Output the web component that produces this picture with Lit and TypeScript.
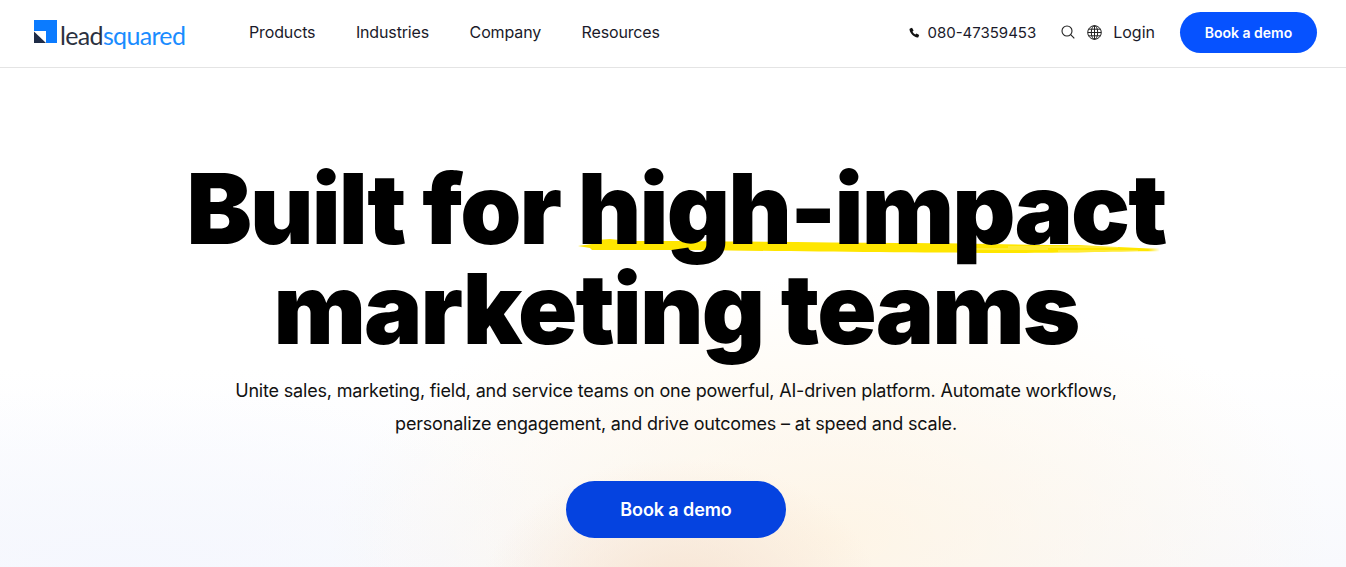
import { LitElement, html, css } from "lit";
import { customElement } from "lit/decorators.js";

@customElement("app-root")
export class AppRoot extends LitElement {
  static styles = css`
    :host { display: block; width: 100%; height: 567px; overflow: hidden; font-family: Inter, "Liberation Sans", sans-serif; color: #000; background: #fff; }
    .nav { height: 68px; box-sizing: border-box; border-bottom: 1px solid #e4e4e4; display: flex; align-items: center; padding: 0 29px 3px 34px; background: #fff; }
    .logo { display: flex; align-items: center; width: 215px; gap: 3px; }
    .logo svg { display: block; flex: none; }
    .word { font-family: Lato, sans-serif; font-weight: 400; font-size: 25px; line-height: 28px; letter-spacing: -0.66px; color: #2b3140; margin-top: 5px; }
    .word span { color: #1a8cff; }
    .links { display: flex; gap: 40.5px; font-size: 16px; letter-spacing: -0.14px; color: #1a1a2a; }
    .right { margin-left: auto; display: flex; align-items: center; color: #1a1a2a; font-size: 16px; }
    .phone { display: flex; align-items: center; gap: 7px; font-size: 15px; margin-right: 25px; }
    .right svg { display: block; }
    .login { margin-left: 11px; margin-right: 25px; }
    .globe { margin-left: 12px; }
    .btn-small { background: #0652ff; color: #fff; width: 137px; height: 41px; border-radius: 21px; display: flex; align-items: center; justify-content: center; font-size: 14px; font-weight: 600; }
    .hero { position: relative; height: 499px; box-sizing: border-box; padding-left: 6px; display: flex; flex-direction: column; align-items: center; overflow: hidden;
      background:
        radial-gradient(ellipse 200px 140px at 680px 530px, rgba(246, 226, 208, 0.9), rgba(246, 226, 208, 0) 100%),
        radial-gradient(ellipse 500px 260px at 830px 470px, rgba(255, 244, 226, 0.85), rgba(255, 244, 226, 0) 100%),
        radial-gradient(ellipse 500px 180px at 120px 499px, rgba(245, 247, 254, 0.9), rgba(245, 247, 254, 0) 100%),
        linear-gradient(180deg, #fff 300px, #f8f9fd 499px);
    }
    h1 { position: relative; margin: 91px 0 0; font-size: 98px; line-height: 100px; font-weight: 870; letter-spacing: -1.9px; text-align: center; white-space: nowrap; }
    .mark { position: relative; display: inline-block; }
    .mark b { position: relative; font-weight: inherit; }
    .brush { position: absolute; left: 0; top: 79px; width: 582px; height: 17px; }
    p { margin: 16px 0 0; font-size: 18px; letter-spacing: -0.18px; line-height: 32.5px; text-align: center; color: #111; }
    .cta { margin-top: 41px; width: 220px; height: 57px; border-radius: 29px; background: #0543e0; color: #fff; font-size: 18px; font-weight: 600; letter-spacing: -0.1px; display: flex; align-items: center; justify-content: center; }
  `;

  render() {
    return html`
      <div class="nav">
        <div class="logo">
          <svg width="23" height="24" viewBox="0 0 23 24">
            <rect width="23" height="23" fill="#0b7bff"></rect>
            <path d="M0 11H12V23H0Z" fill="#fff"></path>
            <path d="M0 11.500L12 23H0Z" fill="#1f2c47"></path>
          </svg>
          <div class="word">lead<span>squared</span></div>
        </div>
        <div class="links">
          <span>Products</span><span>Industries</span><span>Company</span><span>Resources</span>
        </div>
        <div class="right">
          <div class="phone">
            <svg width="11" height="11" viewBox="0 0 24 24"><path d="M6.6 1.8 10 7.6 7.6 10.4c1.3 2.7 3.3 4.7 6 6l2.8-2.4 5.8 3.4-1.6 4.4c-.4.8-1.2 1.2-2 1.1C10.200 21.800 2.200 13.800 1.100 5.400 1 4.600 1.400 3.800 2.200 3.400Z" fill="#111"></path></svg>
            <span>080-47359453</span>
          </div>
          <svg width="14" height="14" viewBox="0 0 14 14" fill="none" stroke="#222" stroke-width="1.100"><circle cx="6" cy="6" r="5"></circle><path d="M9.700 9.700 13.300 13.300"></path></svg>
          <svg class="globe" width="15" height="15" viewBox="0 0 15 15" fill="none" stroke="#222" stroke-width="1"><circle cx="7.500" cy="7.500" r="6.800"></circle><ellipse cx="7.500" cy="7.500" rx="3.200" ry="6.800"></ellipse><path d="M7.500 .7V14.300M.7 7.500H14.300M1.600 4.200H13.400M1.600 10.800H13.400"></path></svg>
          <span class="login">Login</span>
          <div class="btn-small">Book a demo</div>
        </div>
      </div>
      <div class="hero">
        <h1>Built for <span class="mark"><svg class="brush" viewBox="0 0 582 17" preserveAspectRatio="none"><path d="M0 8 14 6 18 2 32 1 50 3C130 3 230 4 320 5C390 5 440 7 500 7L540 9 582 11 570 12 582 13C520 14 480 15 420 15C320 15 200 13 120 12C70 12 40 12 14 12L12 10Z" fill="#ffe600"></path><path d="M380 11H470M430 9H540M480 13H560" stroke="#fff" stroke-width=".6" opacity=".7" fill="none"></path></svg><b>high-impact</b></span><br>marketing teams</h1>
        <p>Unite sales, marketing, field, and service teams on one powerful, AI-driven platform. Automate workflows,<br>personalize engagement, and drive outcomes – at speed and scale.</p>
        <div class="cta">Book a demo</div>
      </div>
    `;
  }
}
